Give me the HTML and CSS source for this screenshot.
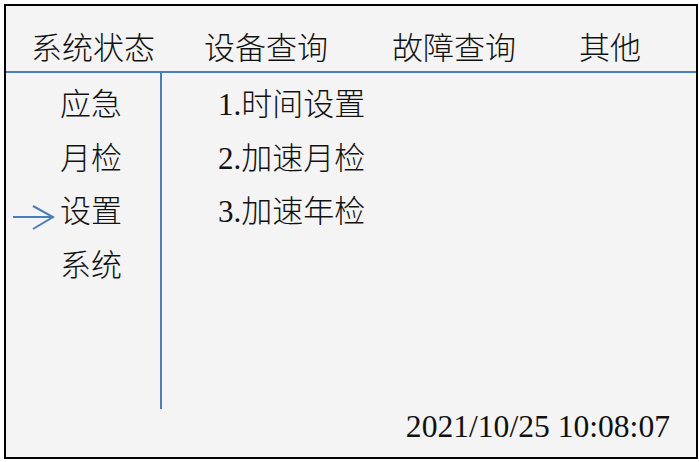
FILE: index.html
```html
<!DOCTYPE html>
<html lang="zh-CN">
<head>
<meta charset="utf-8">
<title>系统状态</title>
<link rel="stylesheet" href="styles.css">
</head>
<body>
<div class="panel">
  <div class="tabs">
    <span class="tab">系统状态</span>
    <span class="tab">设备查询</span>
    <span class="tab">故障查询</span>
    <span class="tab">其他</span>
  </div>
  <div class="main">
    <ul class="nav">
      <li class="nav-item"><span class="mark"></span><span>应急</span></li>
      <li class="nav-item"><span class="mark"></span><span>月检</span></li>
      <li class="nav-item active"><span class="mark"><svg class="arrow" width="42" height="36" viewBox="0 0 42 36"><path d="M0 23 H40 M20 12 L40 23 L20 35" fill="none" stroke="#4a7ebb" stroke-width="2"/></svg></span><span>设置</span></li>
      <li class="nav-item"><span class="mark"></span><span>系统</span></li>
    </ul>
    <ul class="options">
      <li>1.时间设置</li>
      <li>2.加速月检</li>
      <li>3.加速年检</li>
    </ul>
  </div>
  <div class="footer">2021/10/25 10:08:07</div>
</div>
</body>
</html>
```

FILE: styles.css
```css
html, body {
  margin: 0;
  padding: 0;
  background: #ffffff;
}
body {
  font-family: "Liberation Serif", "Noto Sans CJK SC", serif;
  font-size: 31px;
  font-weight: 300;
  color: #111111;
}
.panel {
  box-sizing: border-box;
  margin: 4px 0 0 4px;
  width: 694px;
  height: 455px;
  border: 2px solid #000000;
  background: #f4f4f4;
  display: flex;
  flex-direction: column;
}
.tabs {
  display: grid;
  grid-template-columns: 173px 188px 187px auto;
  padding: 20px 0 0 25px;
  height: 45px;
  line-height: 45px;
  border-bottom: 2px solid #4a7ebb;
  white-space: nowrap;
}
.main {
  display: flex;
  height: 336px;
}
.nav, .options {
  list-style: none;
  margin: 0;
  padding: 5px 0 0 0;
}
.nav {
  width: 154px;
  border-right: 2px solid #4a7ebb;
}
.nav-item {
  display: flex;
  align-items: center;
  height: 53.5px;
  line-height: 53.5px;
  padding-left: 7px;
}
.mark {
  display: flex;
  align-items: center;
  width: 42px;
  height: 36px;
  margin-right: 5px;
  flex: none;
}
.arrow {
  display: block;
}
.options {
  padding-left: 56px;
}
.options li {
  height: 53.5px;
  line-height: 53.5px;
  white-space: nowrap;
}
.footer {
  flex: 1;
  font-size: 31.6px;
  line-height: 35px;
  text-align: right;
  padding-right: 26px;
}
```
